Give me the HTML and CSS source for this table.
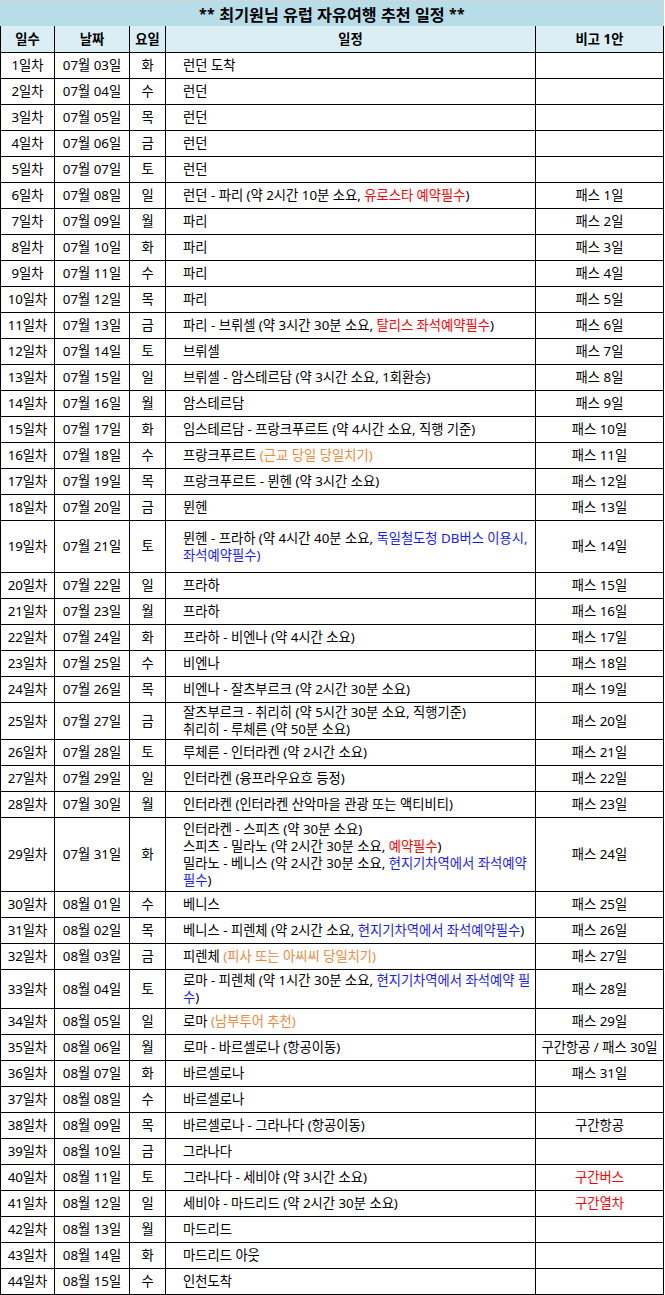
FILE: index.html
```html
<!DOCTYPE html>
<html lang="ko">
<head>
<meta charset="utf-8">
<title>최기원님 유럽 자유여행 추천 일정</title>
<link rel="stylesheet" href="styles.css">
</head>
<body>
<div class="sheet">
  <div class="title"><span class="star">**</span>&nbsp;최기원님 유럽 자유여행 추천 일정&nbsp;<span class="star">**</span></div>
  <div class="row head"><div>일수</div><div>날짜</div><div>요일</div><div>일정</div><div>비고 1안</div></div>

  <div class="row"><div>1일차</div><div>07월 03일</div><div>화</div><div class="plan"><span>런던 도착</span></div><div></div></div>
  <div class="row"><div>2일차</div><div>07월 04일</div><div>수</div><div class="plan"><span>런던</span></div><div></div></div>
  <div class="row"><div>3일차</div><div>07월 05일</div><div>목</div><div class="plan"><span>런던</span></div><div></div></div>
  <div class="row"><div>4일차</div><div>07월 06일</div><div>금</div><div class="plan"><span>런던</span></div><div></div></div>
  <div class="row"><div>5일차</div><div>07월 07일</div><div>토</div><div class="plan"><span>런던</span></div><div></div></div>
  <div class="row"><div>6일차</div><div>07월 08일</div><div>일</div><div class="plan"><span>런던 - 파리 (약 2시간 10분 소요, <em class="red">유로스타 예약필수</em>)</span></div><div>패스 1일</div></div>
  <div class="row"><div>7일차</div><div>07월 09일</div><div>월</div><div class="plan"><span>파리</span></div><div>패스 2일</div></div>
  <div class="row"><div>8일차</div><div>07월 10일</div><div>화</div><div class="plan"><span>파리</span></div><div>패스 3일</div></div>
  <div class="row"><div>9일차</div><div>07월 11일</div><div>수</div><div class="plan"><span>파리</span></div><div>패스 4일</div></div>
  <div class="row"><div>10일차</div><div>07월 12일</div><div>목</div><div class="plan"><span>파리</span></div><div>패스 5일</div></div>
  <div class="row"><div>11일차</div><div>07월 13일</div><div>금</div><div class="plan"><span>파리 - 브뤼셀 (약 3시간 30분 소요, <em class="red">탈리스 좌석예약필수</em>)</span></div><div>패스 6일</div></div>
  <div class="row"><div>12일차</div><div>07월 14일</div><div>토</div><div class="plan"><span>브뤼셀</span></div><div>패스 7일</div></div>
  <div class="row"><div>13일차</div><div>07월 15일</div><div>일</div><div class="plan"><span>브뤼셀 - 암스테르담 (약 3시간 소요, 1회환승)</span></div><div>패스 8일</div></div>
  <div class="row"><div>14일차</div><div>07월 16일</div><div>월</div><div class="plan"><span>암스테르담</span></div><div>패스 9일</div></div>
  <div class="row"><div>15일차</div><div>07월 17일</div><div>화</div><div class="plan"><span>임스테르담 - 프랑크푸르트 (약 4시간 소요, 직행 기준)</span></div><div>패스 10일</div></div>
  <div class="row"><div>16일차</div><div>07월 18일</div><div>수</div><div class="plan"><span>프랑크푸르트 <em class="orange">(근교 당일 당일치기)</em></span></div><div>패스 11일</div></div>
  <div class="row"><div>17일차</div><div>07월 19일</div><div>목</div><div class="plan"><span>프랑크푸르트 - 뮌헨 (약 3시간 소요)</span></div><div>패스 12일</div></div>
  <div class="row"><div>18일차</div><div>07월 20일</div><div>금</div><div class="plan"><span>뮌헨</span></div><div>패스 13일</div></div>
  <div class="row h52"><div>19일차</div><div>07월 21일</div><div>토</div><div class="plan"><span>뮌헨 - 프라하 (약 4시간 40분 소요, <em class="blue">독일철도청 DB버스 이용시,<br>좌석예약필수)</em></span></div><div>패스 14일</div></div>
  <div class="row"><div>20일차</div><div>07월 22일</div><div>일</div><div class="plan"><span>프라하</span></div><div>패스 15일</div></div>
  <div class="row"><div>21일차</div><div>07월 23일</div><div>월</div><div class="plan"><span>프라하</span></div><div>패스 16일</div></div>
  <div class="row"><div>22일차</div><div>07월 24일</div><div>화</div><div class="plan"><span>프라하 - 비엔나 (약 4시간 소요)</span></div><div>패스 17일</div></div>
  <div class="row"><div>23일차</div><div>07월 25일</div><div>수</div><div class="plan"><span>비엔나</span></div><div>패스 18일</div></div>
  <div class="row"><div>24일차</div><div>07월 26일</div><div>목</div><div class="plan"><span>비엔나 - 잘츠부르크 (약 2시간 30분 소요)</span></div><div>패스 19일</div></div>
  <div class="row h37"><div>25일차</div><div>07월 27일</div><div>금</div><div class="plan"><span>잘츠부르크 - 취리히 (약 5시간 30분 소요, 직행기준)<br>취리히 - 루체른 (약 50분 소요)</span></div><div>패스 20일</div></div>
  <div class="row"><div>26일차</div><div>07월 28일</div><div>토</div><div class="plan"><span>루체른 - 인터라켄 (약 2시간 소요)</span></div><div>패스 21일</div></div>
  <div class="row"><div>27일차</div><div>07월 29일</div><div>일</div><div class="plan"><span>인터라켄 (융프라우요흐 등정)</span></div><div>패스 22일</div></div>
  <div class="row"><div>28일차</div><div>07월 30일</div><div>월</div><div class="plan"><span>인터라켄 (인터라켄 산악마을 관광 또는 액티비티)</span></div><div>패스 23일</div></div>
  <div class="row h74"><div>29일차</div><div>07월 31일</div><div>화</div><div class="plan"><span>인터라켄 - 스피츠 (약 30분 소요)<br>스피츠 - 밀라노 (약 2시간 30분 소요, <em class="red">예약필수</em>)<br>밀라노 - 베니스 (약 2시간 30분 소요, <em class="blue">현지기차역에서 좌석예약<br>필수</em>)</span></div><div>패스 24일</div></div>
  <div class="row"><div>30일차</div><div>08월 01일</div><div>수</div><div class="plan"><span>베니스</span></div><div>패스 25일</div></div>
  <div class="row"><div>31일차</div><div>08월 02일</div><div>목</div><div class="plan"><span>베니스 - 피렌체 (약 2시간 소요, <em class="blue">현지기차역에서 좌석예약필수</em>)</span></div><div>패스 26일</div></div>
  <div class="row"><div>32일차</div><div>08월 03일</div><div>금</div><div class="plan"><span>피렌체 <em class="orange">(피사 또는 아씨씨 당일치기)</em></span></div><div>패스 27일</div></div>
  <div class="row h39"><div>33일차</div><div>08월 04일</div><div>토</div><div class="plan"><span>로마 - 피렌체 (약 1시간 30분 소요, <em class="blue">현지기차역에서 좌석예약 필<br>수</em>)</span></div><div>패스 28일</div></div>
  <div class="row"><div>34일차</div><div>08월 05일</div><div>일</div><div class="plan"><span>로마 <em class="orange">(남부투어 추천)</em></span></div><div>패스 29일</div></div>
  <div class="row"><div>35일차</div><div>08월 06일</div><div>월</div><div class="plan"><span>로마 - 바르셀로나 (항공이동)</span></div><div>구간항공 / 패스 30일</div></div>
  <div class="row"><div>36일차</div><div>08월 07일</div><div>화</div><div class="plan"><span>바르셀로나</span></div><div>패스 31일</div></div>
  <div class="row"><div>37일차</div><div>08월 08일</div><div>수</div><div class="plan"><span>바르셀로나</span></div><div></div></div>
  <div class="row"><div>38일차</div><div>08월 09일</div><div>목</div><div class="plan"><span>바르셀로나 - 그라나다 (항공이동)</span></div><div>구간항공</div></div>
  <div class="row"><div>39일차</div><div>08월 10일</div><div>금</div><div class="plan"><span>그라나다</span></div><div></div></div>
  <div class="row"><div>40일차</div><div>08월 11일</div><div>토</div><div class="plan"><span>그라나다 - 세비야 (약 3시간 소요)</span></div><div class="red">구간버스</div></div>
  <div class="row"><div>41일차</div><div>08월 12일</div><div>일</div><div class="plan"><span>세비야 - 마드리드 (약 2시간 30분 소요)</span></div><div class="red">구간열차</div></div>
  <div class="row"><div>42일차</div><div>08월 13일</div><div>월</div><div class="plan"><span>마드리드</span></div><div></div></div>
  <div class="row"><div>43일차</div><div>08월 14일</div><div>화</div><div class="plan"><span>마드리드 아웃</span></div><div></div></div>
  <div class="row"><div>44일차</div><div>08월 15일</div><div>수</div><div class="plan"><span>인천도착</span></div><div></div></div>
</div>
</body>
</html>
```

FILE: styles.css
```css
html, body {
  margin: 0;
  padding: 0;
  background: #ffffff;
}

body {
  font-family: "Noto Sans", "Noto Sans CJK KR", sans-serif;
  font-size: 13.3px;
  color: #000000;
}

.sheet {
  width: 664px;
}

.title {
  box-sizing: border-box;
  height: 26px;
  border-top: 1px solid #d4d4d4;
  background: #b7dde8;
  display: flex;
  align-items: center;
  justify-content: center;
  font-size: 16.2px;
  font-weight: 700;
  white-space: nowrap;
}

.star {
  font-size: 14px;
  vertical-align: -2px;
  letter-spacing: 0.5px;
}

.row {
  box-sizing: border-box;
  display: grid;
  grid-template-columns: 55px 75px 36px 370px 128px;
  height: 26px;
  border-bottom: 1px solid #000000;
}

.row > div {
  border-right: 1px solid #000000;
  display: flex;
  align-items: center;
  justify-content: center;
  line-height: 17px;
  white-space: nowrap;
  overflow: hidden;
}

.row > div:first-child {
  border-left: 1px solid #000000;
}

.row > .plan {
  justify-content: flex-start;
  padding-left: 17px;
}

.head {
  height: 27px;
  background: #daeef3;
  font-weight: 700;
}

.head > div:nth-child(4) {
  justify-content: center;
}

.h52 { height: 52px; }
.h37 { height: 37px; }
.h74 { height: 74px; }
.h39 { height: 39px; }

em {
  font-style: normal;
}

.red { color: #ff0000; }
.blue { color: #1a1aff; }
.orange { color: #ee8a3a; }
```
